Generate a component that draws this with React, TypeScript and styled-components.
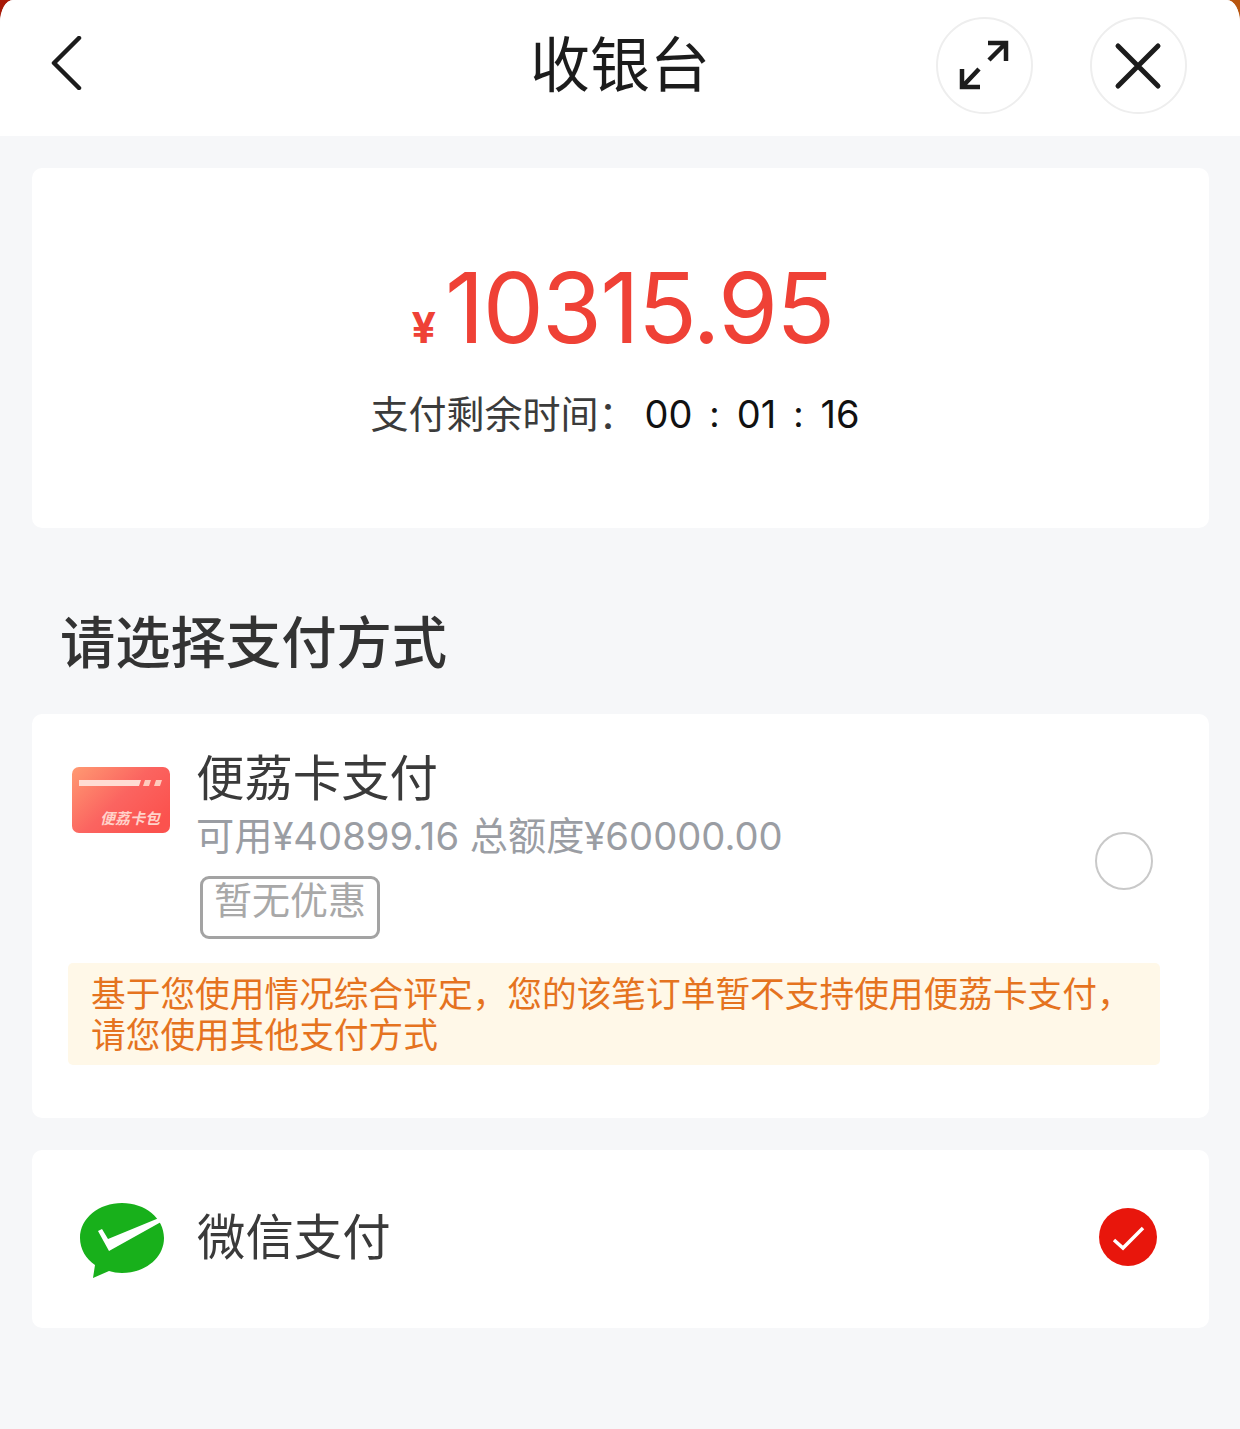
import React from 'react';
import styled, { createGlobalStyle } from 'styled-components';

const GlobalStyle = createGlobalStyle`
  html, body {
    margin: 0;
    padding: 0;
  }
  body {
    font-family: "Inter", "Noto Sans CJK SC", sans-serif;
    background: #f6f7f9;
  }
`;

const App: React.FC = () => {
  return (
    <Backdrop>
      <GlobalStyle />
      <Sheet>
        <Header>
          <BackButton aria-label="back">
            <svg width="32" height="54" viewBox="0 0 32 54" fill="none">
              <path d="M28 2 L3 27 L28 52" stroke="#1c1c1c" strokeWidth="4.5" strokeLinecap="round" strokeLinejoin="round" />
            </svg>
          </BackButton>
          <Title>收银台</Title>
          <HeaderActions>
            <RoundButton aria-label="expand">
              <svg width="97" height="97" viewBox="0 0 97 97" fill="none">
                <path d="M53 43 L70 26 M52 26 H70 V44 M43 52 L26 70 M26 52 V70 H44" stroke="#1c1c1c" strokeWidth="4.5" />
              </svg>
            </RoundButton>
            <RoundButton aria-label="close">
              <svg width="97" height="97" viewBox="0 0 97 97" fill="none">
                <path d="M28 29 L68 69 M68 29 L28 69" stroke="#1c1c1c" strokeWidth="5" strokeLinecap="round" />
              </svg>
            </RoundButton>
          </HeaderActions>
        </Header>

        <Body>
          <SummaryCard>
            <Amount>
              <Currency>¥</Currency>10315.95
            </Amount>
            <Countdown>
              <CountdownLabel>支付剩余时间：</CountdownLabel>
              <CountdownTime>00</CountdownTime>
              <CountdownColon>:</CountdownColon>
              <CountdownTime>01</CountdownTime>
              <CountdownColon>:</CountdownColon>
              <CountdownTime>16</CountdownTime>
            </Countdown>
          </SummaryCard>

          <SectionTitle>请选择支付方式</SectionTitle>

          <MethodCard>
            <MethodRow>
              <CardIcon>
                <svg width="98" height="66" viewBox="0 0 98 66">
                  <defs>
                    <linearGradient id="cardFill" x1="0" y1="0" x2="1" y2="0.7">
                      <stop offset="0" stopColor="#ff9a72" />
                      <stop offset="0.55" stopColor="#fb6460" />
                      <stop offset="1" stopColor="#fb524e" />
                    </linearGradient>
                  </defs>
                  <rect width="98" height="66" rx="7" fill="url(#cardFill)" />
                  <path d="M7 13 H69 L67 19 H7 Z" fill="#ffdcd3" />
                  <path d="M73 13 H79 L77 19 H71 Z M84 13 H90 L88 19 H82 Z" fill="#ffcabd" />
                  <text x="28" y="57" fontSize="15" fontWeight="700" fontStyle="italic" fill="#ffd2ca" fontFamily="Noto Sans CJK SC">便荔卡包</text>
                </svg>
              </CardIcon>
              <MethodInfo>
                <MethodName>便荔卡支付</MethodName>
                <MethodCredit>可用¥40899.16 总额度¥60000.00</MethodCredit>
                <NoDiscountTag>暂无优惠</NoDiscountTag>
              </MethodInfo>
              <Radio />
            </MethodRow>
            <Notice>基于您使用情况综合评定，您的该笔订单暂不支持使用便荔卡支付，请您使用其他支付方式</Notice>
          </MethodCard>

          <WechatCard>
            <WechatIcon width="85" height="75" viewBox="0 0 85 75">
              <path
                d="M42 0 C65 0 84 15 84 35 C84 55 65 70 42 70 C37 70 33 69 29 68 L13 75 L15 62 C6 56 0 46 0 35 C0 15 19 0 42 0 Z"
                fill="#18b01b"
              />
              <path d="M18 28 L22 26 L28 36 L79 15 L81 19 L29 48 Z" fill="#ffffff" />
            </WechatIcon>
            <MethodName>微信支付</MethodName>
            <SelectedMark>
              <svg width="58" height="58" viewBox="0 0 58 58">
                <circle cx="29" cy="29" r="29" fill="#e8160c" />
                <path d="M15 32 L24 40 L44 20" fill="none" stroke="#ffffff" strokeWidth="3.5" />
              </svg>
            </SelectedMark>
          </WechatCard>
        </Body>
      </Sheet>
    </Backdrop>
  );
};

export default App;

const Backdrop = styled.div`
  background: linear-gradient(to right, #a81a08, #b8560f);
  width: 1240px;
  height: 1429px;
  overflow: hidden;
`;

const Sheet = styled.div`
  height: 100%;
  background: #f6f7f9;
  border-radius: 13px 13px 0 0 / 23px 23px 0 0;
  overflow: hidden;
`;

const Header = styled.header`
  height: 136px;
  background: #ffffff;
  display: grid;
  grid-template-columns: 1fr auto 1fr;
  align-items: center;
`;

const BackButton = styled.div`
  display: flex;
  padding-left: 51px;
  margin-top: -10px;
`;

const Title = styled.h1`
  margin: -6px 0 0;
  font-size: 60px;
  font-weight: 400;
  line-height: 80px;
  color: #1c1c1c;
`;

const HeaderActions = styled.div`
  display: flex;
  justify-content: flex-end;
  gap: 57px;
  padding-right: 53px;
  margin-top: -6px;
`;

const RoundButton = styled.div`
  width: 97px;
  height: 97px;
  box-sizing: border-box;
  border: 2px solid #eeeeee;
  border-radius: 50%;
  display: flex;
  align-items: center;
  justify-content: center;

  svg {
    flex-shrink: 0;
  }
`;

const Body = styled.main`
  padding: 32px 31px 0 32px;
`;

const Card = styled.section`
  background: #ffffff;
  border-radius: 10px;
`;

const SummaryCard = styled(Card)`
  height: 360px;
  display: flex;
  flex-direction: column;
  align-items: center;
  padding-top: 85px;
  box-sizing: border-box;
`;

const Amount = styled.div`
  display: flex;
  align-items: baseline;
  margin-left: 4px;
  font-size: 97px;
  line-height: 110px;
  color: #ef4136;
  letter-spacing: -1.8px;
`;

const Currency = styled.span`
  font-size: 43px;
  font-weight: 700;
  margin-right: 9px;
  letter-spacing: 0;
`;

const Countdown = styled.div`
  display: flex;
  align-items: center;
  margin: 7px 11px 0 0;
  line-height: 50px;
  font-size: 38px;
`;

const CountdownLabel = styled.span`
  color: #3b3b3b;
  width: 274px;
`;

const CountdownTime = styled.span`
  color: #111111;
  font-size: 38px;
`;

const CountdownColon = styled.span`
  color: #111111;
  font-size: 36px;
  margin: 0 17px;
`;

const SectionTitle = styled.h2`
  margin: 0;
  height: 186px;
  box-sizing: border-box;
  padding: 80px 0 0 28px;
  font-size: 55.3px;
  line-height: 70px;
  font-weight: 500;
  color: #333333;
`;

const MethodCard = styled(Card)`
  height: 404px;
  box-sizing: border-box;
  padding-top: 34px;
`;

const MethodRow = styled.div`
  display: flex;
  align-items: flex-start;
  padding: 0 56px 0 40px;
`;

const CardIcon = styled.div`
  display: flex;
  margin-top: 19px;
  margin-right: 26px;
`;

const MethodInfo = styled.div`
  display: flex;
  flex-direction: column;
  align-items: flex-start;
  flex: 1;
`;

const MethodName = styled.div`
  padding-top: 2px;
  font-size: 48.4px;
  line-height: 58px;
  color: #3a3a3a;
`;

const MethodCredit = styled.div`
  margin-top: 3px;
  font-size: 38.2px;
  line-height: 50px;
  color: #9a9da3;
`;

const NoDiscountTag = styled.div`
  margin: 15px 0 0 4px;
  width: 180px;
  height: 63px;
  box-sizing: border-box;
  border: 3px solid #a3a3a3;
  border-radius: 9px;
  font-size: 38px;
  line-height: 43px;
  text-align: center;
  color: #a8a8a8;
`;

const Radio = styled.div`
  width: 58px;
  height: 58px;
  box-sizing: border-box;
  border: 2px solid #c9c9c9;
  border-radius: 50%;
  margin-top: 84px;
`;

const Notice = styled.div`
  margin: 24px 49px 0 36px;
  height: 102px;
  box-sizing: border-box;
  padding: 11px 10px 0 23px;
  background: #fff8e8;
  border-radius: 5px;
  font-size: 34.7px;
  line-height: 41px;
  color: #e5731f;
`;

const WechatCard = styled(Card)`
  height: 178px;
  box-sizing: border-box;
  margin-top: 32px;
  display: flex;
  align-items: center;
  gap: 32px;
  padding: 0 52px 4px 48px;
`;

const WechatIcon = styled.svg`
  flex-shrink: 0;
  margin-top: 7px;
`;

const SelectedMark = styled.div`
  display: flex;
  margin-left: auto;
`;
